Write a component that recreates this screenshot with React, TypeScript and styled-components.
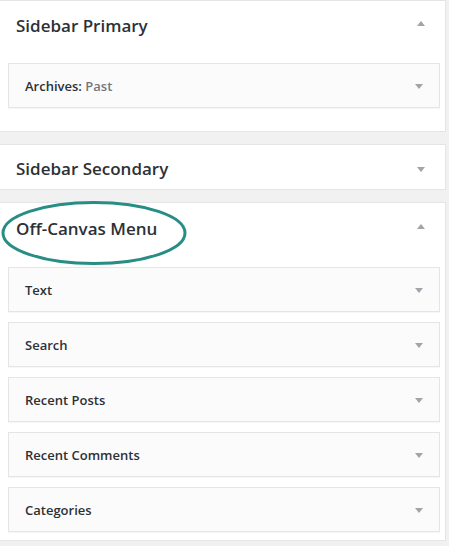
import React from "react";
import styled, { createGlobalStyle } from "styled-components";

const Global = createGlobalStyle`
  html, body { margin: 0; padding: 0; background: #f1f1f1; }
  body { font-family: "Open Sans", "Noto Sans", Arial, sans-serif; color: #23282d; }
`;

const Page = styled.div`
  display: flex;
  flex-direction: column;
  gap: 12px;
  width: 446px;
`;

const Panel = styled.section<{ $padTop: number; $padBottom: number }>`
  position: relative;
  box-sizing: border-box;
  background: #fff;
  border: 1px solid #e5e5e5;
  border-left: none;
  padding-bottom: ${(p) => p.$padBottom}px;
  & > ul { padding-top: ${(p) => p.$padTop}px; }
`;

const PanelHeader = styled.div<{ $top: number; $height?: number }>`
  position: relative;
  display: flex;
  justify-content: space-between;
  align-items: flex-start;
  padding: ${(p) => p.$top}px 20px 0 16px;
  height: ${(p) => p.$height ?? 46}px;
  box-sizing: border-box;
`;

const PanelTitle = styled.h2`
  margin: 0;
  font-size: 17px;
  line-height: 22px;
  font-weight: 600;
  color: #2c3136;
  position: relative;
  z-index: 1;
`;

const Arrow = styled.span<{ $up?: boolean }>`
  width: 0;
  height: 0;
  border-left: 4px solid transparent;
  border-right: 4px solid transparent;
  ${(p) =>
    p.$up
      ? "border-bottom: 5px solid #a0a5aa;"
      : "border-top: 5px solid #a0a5aa;"}
  margin-top: ${(p) => (p.$up ? 6 : 9)}px;
`;

const WidgetList = styled.ul`
  list-style: none;
  margin: 0;
  padding: 0 5px 0 8px;
  display: flex;
  flex-direction: column;
  gap: 10px;
`;

const Widget = styled.li`
  box-sizing: border-box;
  height: 45px;
  border: 1px solid #e5e5e5;
  background: #fcfbfc;
  display: flex;
  align-items: center;
  justify-content: space-between;
  padding: 0 16px 0 16px;
  box-shadow: 0 1px 1px rgba(0, 0, 0, 0.03);
`;

const WidgetTitle = styled.span`
  font-size: 13px;
  font-weight: 600;
  color: #2c3136;
`;

const WidgetSub = styled.span`
  color: #72777c;
  font-weight: 600;
`;

const WidgetArrow = styled(Arrow)`
  margin-top: 2px;
`;

const Highlight = styled.svg`
  position: absolute;
  left: 0;
  top: -4px;
  width: 192px;
  height: 68px;
  pointer-events: none;
  z-index: 2;
`;

function WidgetRow({ title, sub }: { title: string; sub?: string }) {
  return (
    <Widget>
      <WidgetTitle>
        {title}
        {sub && <WidgetSub> {sub}</WidgetSub>}
      </WidgetTitle>
      <WidgetArrow />
    </Widget>
  );
}

export default function App() {
  return (
    <>
      <Global />
      <Page>
        <Panel $padTop={16} $padBottom={23}>
          <PanelHeader $top={14}>
            <PanelTitle>Sidebar Primary</PanelTitle>
            <Arrow $up />
          </PanelHeader>
          <WidgetList>
            <WidgetRow title="Archives:" sub="Past" />
          </WidgetList>
        </Panel>
        <Panel $padTop={0} $padBottom={0}>
          <PanelHeader $top={13} $height={44}>
            <PanelTitle>Sidebar Secondary</PanelTitle>
            <Arrow />
          </PanelHeader>
        </Panel>
        <Panel $padTop={18} $padBottom={8}>
          <PanelHeader $top={15}>
            <PanelTitle>Off-Canvas Menu</PanelTitle>
            <Arrow $up />
            <Highlight viewBox="0 0 192 68">
              <ellipse
                cx="94"
                cy="34"
                rx="91"
                ry="30.5"
                fill="none"
                stroke="#278d85"
                strokeWidth="3"
              />
            </Highlight>
          </PanelHeader>
          <WidgetList>
            <WidgetRow title="Text" />
            <WidgetRow title="Search" />
            <WidgetRow title="Recent Posts" />
            <WidgetRow title="Recent Comments" />
            <WidgetRow title="Categories" />
          </WidgetList>
        </Panel>
      </Page>
    </>
  );
}
